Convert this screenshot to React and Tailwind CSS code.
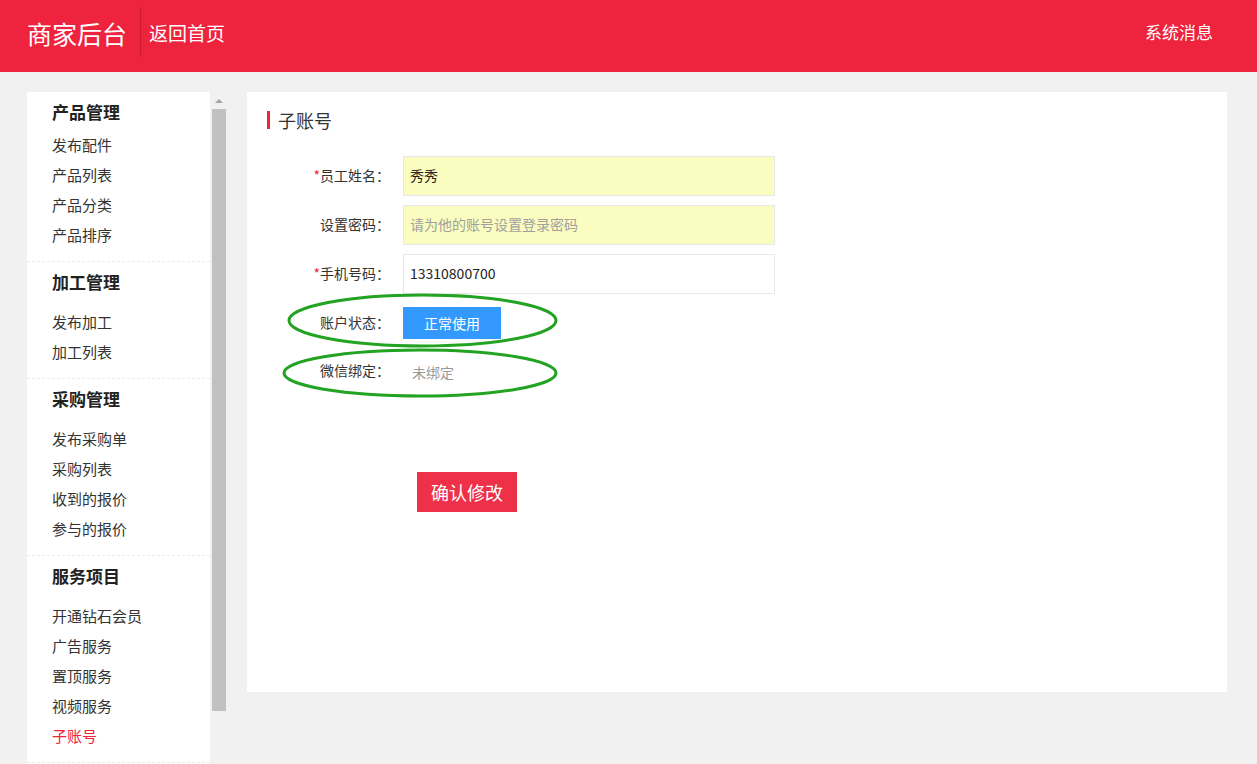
import React from 'react';

const font = { fontFamily: '"Noto Sans CJK SC", "Noto Sans", sans-serif' };

const groups = [
    { title: '产品管理', items: ['发布配件', '产品列表', '产品分类', '产品排序'], first: true },
    { title: '加工管理', items: ['发布加工', '加工列表'] },
    { title: '采购管理', items: ['发布采购单', '采购列表', '收到的报价', '参与的报价'] },
    { title: '服务项目', items: ['开通钻石会员', '广告服务', '置顶服务', '视频服务', '子账号'] },
];

const Sidebar = () => (
    <div className="flex shrink-0">
        <div className="w-[183px] h-[672px] bg-white overflow-hidden">
            {groups.map((g) => (
                <div
                    key={g.title}
                    className="pl-[25px] pt-[8px] pb-[11px] border-b border-dashed border-[#ececec]"
                >
                    <div className={`h-[24px] leading-[24px] text-[17px] font-bold text-[#222] ${g.first ? 'mb-[6px]' : 'mb-[13px]'}`}>
                        {g.title}
                    </div>
                    {g.items.map((it) => (
                        <div
                            key={it}
                            className={`h-[30px] leading-[30px] text-[15px] ${it === '子账号' ? 'text-[#ee233d]' : 'text-[#333]'}`}
                        >
                            {it}
                        </div>
                    ))}
                </div>
            ))}
        </div>
        {/* fake scrollbar */}
        <div className="ml-[2px] w-[14px] h-[672px] bg-[#f1f1f1] flex flex-col">
            <div className="h-[17px] flex items-center justify-center">
                <div className="w-0 h-0 border-l-[4px] border-r-[4px] border-b-[4px] border-l-transparent border-r-transparent border-b-[#a3a3a3]" />
            </div>
            <div className="h-[602px] bg-[#c1c1c1]" />
        </div>
    </div>
);

const Row = ({ label, required, children }) => (
    <div className="flex items-center">
        <div className="w-[123px] text-right text-[14px] text-[#333] pb-[2px]">
            {required && <span className="text-[#ee233d]">*</span>}
            {label}：
        </div>
        <div className="ml-[13px]">{children}</div>
    </div>
);

const Field = ({ value, placeholder, yellow }) => (
    <input
        readOnly
        value={value}
        placeholder={placeholder}
        className={`w-[372px] h-[40px] border border-[#e8e8e8] px-[6px] pb-[2px] text-[14px] text-[#222] placeholder:text-[#a0a0a0] outline-none ${yellow ? 'bg-[#fafdbf]' : 'bg-white'}`}
        style={font}
    />
);

const Main = () => (
    <div className="relative ml-[21px] w-[980px] h-[600px] bg-white px-[20px] pt-[18px]">
        <div className="flex items-center h-[20px]">
            <div className="w-[3px] h-[18px] bg-[#ee233d]" />
            <div className="ml-[8px] text-[18px] text-[#333] leading-[20px]">子账号</div>
        </div>

        <div className="mt-[26px] flex flex-col gap-[9px]">
            <Row label="员工姓名" required>
                <Field value="秀秀" yellow />
            </Row>
            <Row label="设置密码">
                <Field value="" placeholder="请为他的账号设置登录密码" yellow />
            </Row>
            <Row label="手机号码" required>
                <Field value="13310800700" />
            </Row>
        </div>

        <div className="mt-[13px]">
            <Row label="账户状态">
                <button className="w-[98px] h-[32px] bg-[#3399ff] text-white text-[14px]">正常使用</button>
            </Row>
        </div>
        <div className="mt-[16px] h-[32px] flex items-center">
            <Row label="微信绑定">
                <span className="pl-[9px] text-[14px] text-[#999]">未绑定</span>
            </Row>
        </div>

        <div className="mt-[85px] pl-[150px]">
            <button className="w-[100px] h-[40px] bg-[#ee3048] text-white text-[18px]">确认修改</button>
        </div>

        {/* annotation ellipses */}
        <svg className="absolute left-0 top-0 pointer-events-none" width="980" height="600">
            <ellipse cx="175.5" cy="228.5" rx="133.5" ry="25.5" fill="none" stroke="#22a322" strokeWidth="3" />
            <ellipse cx="173" cy="281" rx="136" ry="23" fill="none" stroke="#22a322" strokeWidth="3" />
        </svg>
    </div>
);

export default function App() {
    return (
        <div className="h-screen overflow-hidden bg-[#f1f1f1]" style={font}>
            <div className="h-[72px] bg-[#ee233d] flex items-start text-white">
                <div className="ml-[27px] mt-[17px] text-[25px] leading-[32px]">商家后台</div>
                <div className="ml-[13px] mt-[7px] w-px h-[50px] bg-[#cc1a2e]" />
                <div className="ml-[8px] mt-[19px] text-[19px] leading-[28px]">返回首页</div>
                <div className="ml-auto mr-[44px] mt-[19px] text-[17px] leading-[26px]">系统消息</div>
            </div>
            <div className="flex pt-[20px] pl-[27px]">
                <Sidebar />
                <Main />
            </div>
        </div>
    );
}
